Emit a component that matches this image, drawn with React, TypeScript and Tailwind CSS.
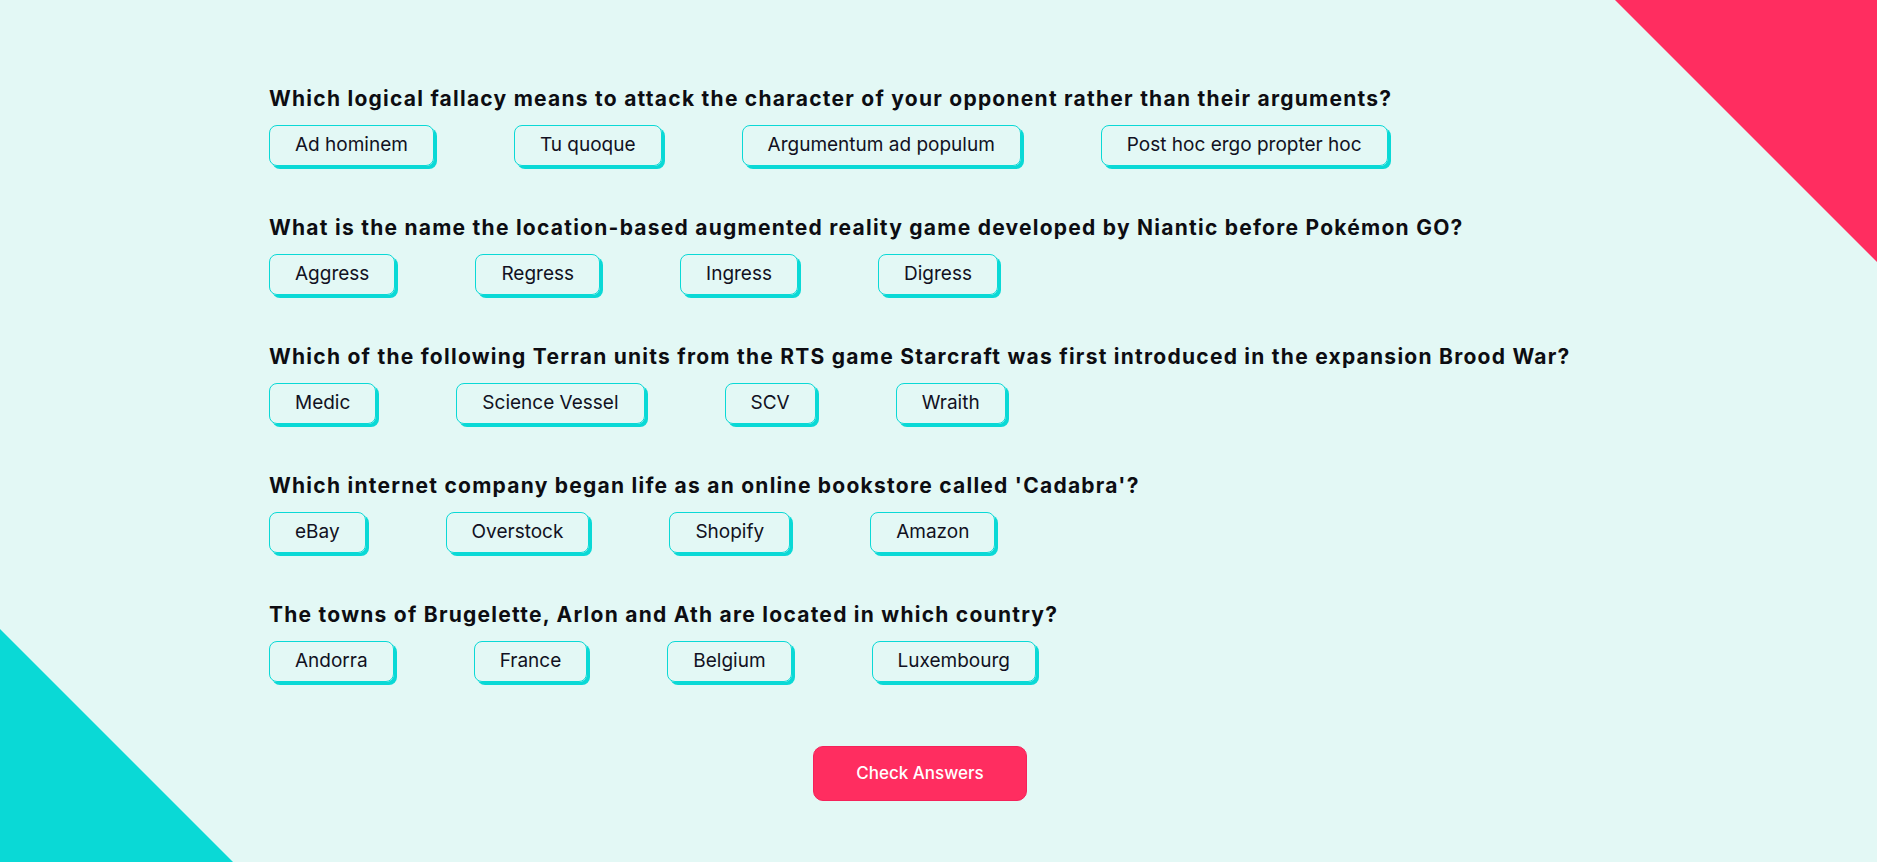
import React from "react";

const questions: { q: string; a: string[] }[] = [
  {
    q: "Which logical fallacy means to attack the character of your opponent rather than their arguments?",
    a: ["Ad hominem", "Tu quoque", "Argumentum ad populum", "Post hoc ergo propter hoc"],
  },
  {
    q: "What is the name the location-based augmented reality game developed by Niantic before Pokémon GO?",
    a: ["Aggress", "Regress", "Ingress", "Digress"],
  },
  {
    q: "Which of the following Terran units from the RTS game Starcraft was first introduced in the expansion Brood War?",
    a: ["Medic", "Science Vessel", "SCV", "Wraith"],
  },
  {
    q: "Which internet company began life as an online bookstore called 'Cadabra'?",
    a: ["eBay", "Overstock", "Shopify", "Amazon"],
  },
  {
    q: "The towns of Brugelette, Arlon and Ath are located in which country?",
    a: ["Andorra", "France", "Belgium", "Luxembourg"],
  },
];

export default function App() {
  return (
    <div className="relative w-full h-[862px] overflow-hidden bg-[#e3f8f5] font-['Inter',sans-serif]">
      <svg className="absolute right-0 top-0" width="262" height="262" viewBox="0 0 262 262">
        <polygon points="0,0 262,0 262,262" fill="#ff2d60" />
      </svg>
      <svg className="absolute left-0 bottom-0" width="233" height="233" viewBox="0 0 233 233">
        <polygon points="0,0 233,233 0,233" fill="#0ad9d6" />
      </svg>
      <div className="relative w-[1302px] ml-[269px] pt-[85px]">
        {questions.map((item, i) => (
          <div key={i} className="mb-[48px]">
            <h2 className="text-[21px] leading-[28px] font-bold tracking-[1.25px] text-[#0d0d12] mb-[12px] whitespace-nowrap">
              {item.q}
            </h2>
            <div className="flex gap-[80px]">
              {item.a.map((ans) => (
                <button
                  key={ans}
                  className="h-[41px] px-[25px] rounded-[8px] border border-[#0ad9d6] shadow-[3px_3px_0_#0ad9d6] text-[19px] text-[#111122] bg-transparent whitespace-nowrap"
                >
                  {ans}
                </button>
              ))}
            </div>
          </div>
        ))}
        <div className="flex justify-center pt-[16px]">
          <button className="w-[214px] h-[55px] rounded-[10px] bg-[#ff2d60] border border-[#f5225a] text-white text-[17px] font-medium">
            Check Answers
          </button>
        </div>
      </div>
    </div>
  );
}
